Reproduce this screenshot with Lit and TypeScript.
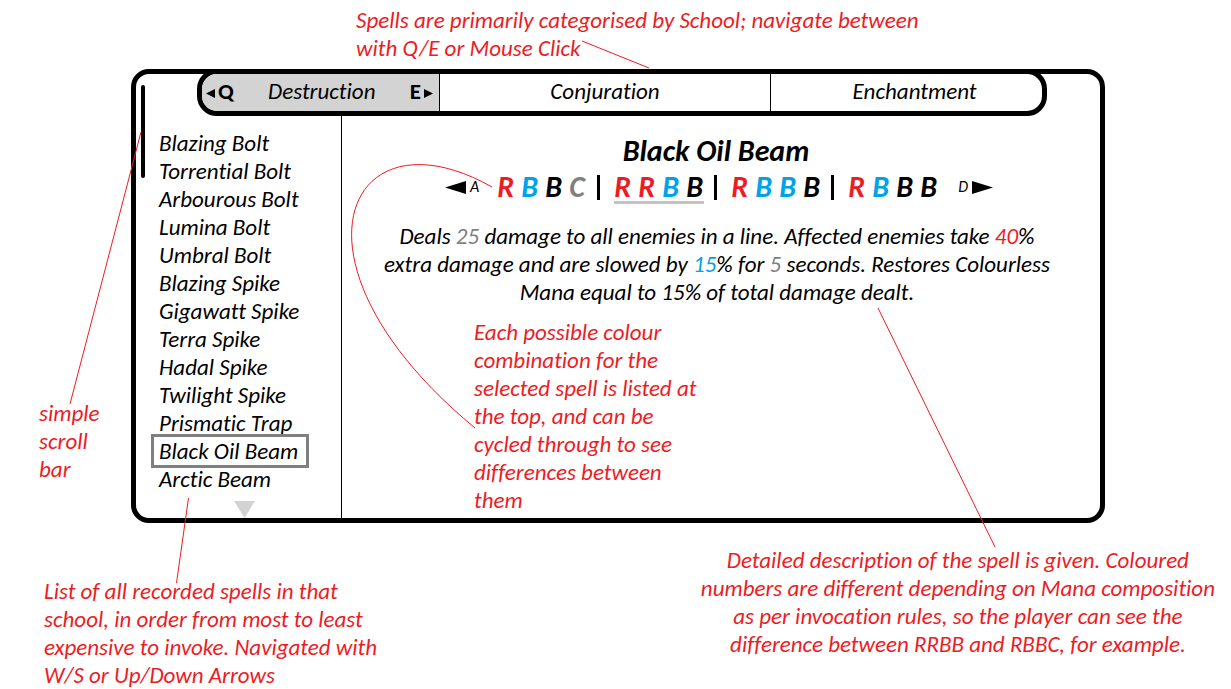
import { LitElement, html, css } from "lit";
import { customElement, state } from "lit/decorators.js";
import { classMap } from "lit/directives/class-map.js";

const SPELLS = [
  "Blazing Bolt", "Torrential Bolt", "Arbourous Bolt", "Lumina Bolt", "Umbral Bolt",
  "Blazing Spike", "Gigawatt Spike", "Terra Spike", "Hadal Spike", "Twilight Spike",
  "Prismatic Trap", "Black Oil Beam", "Arctic Beam",
];

// R is red mana, U is blue, B is black, C is colourless.
const COMBOS = ["RUBC", "RRUB", "RUUB", "RUBB"];
const MANA: Record<string, { cls: string; label: string }> = {
  R: { cls: "red", label: "R" },
  U: { cls: "blue", label: "B" },
  B: { cls: "black", label: "B" },
  C: { cls: "grey", label: "C" },
};

@customElement("app-root")
export class AppRoot extends LitElement {
  @state() private spell = "Black Oil Beam";
  @state() private combo = 1;

  static styles = css`
    :host {
      display: block;
      position: relative;
      font: italic 23px/28px Calibri, Carlito, Lato, sans-serif;
      font-variant-ligatures: none;
      color: #000;
      background: #fff;
    }
    * { box-sizing: border-box; }
    h1, p, ul { margin: 0; padding: 0; }
    ul { list-style: none; }
    button {
      font: inherit;
      font-variant-ligatures: inherit;
      color: inherit;
      background: none;
      border: 0;
      padding: 0;
      margin: 0;
      cursor: pointer;
      white-space: nowrap;
    }
    .page {
      display: grid;
      grid-template-columns: 131px minmax(0, 1fr) 126px;
      min-height: 100vh;
      align-content: start;
      overflow: hidden;
    }
    .note { color: #ed1c24; white-space: nowrap; }
    .note-top { grid-column: 2; padding: 6px 0 7px 225px; }
    .note-scroll { grid-column: 1; align-self: end; padding: 0 0 40px 39px; }
    .note-combo { padding: 12px 0 4px 132px; align-self: stretch; }
    .footer {
      grid-column: 1 / -1;
      display: flex;
      justify-content: space-between;
      align-items: flex-start;
      padding: 23px 16px 0 44px;
    }
    .note-list { padding-top: 31px; }
    .note-detail { text-align: center; }

    .frame {
      grid-column: 2;
      border: 5px solid #000;
      border-radius: 18px;
      display: grid;
      grid-template-columns: 18px 187px minmax(0, 1fr);
      grid-template-rows: 42px auto;
    }
    .tabs {
      grid-area: 1 / 1 / 2 / 4;
      display: grid;
      grid-template-columns: 237fr 331fr 272fr;
      margin: -5px 53px 0 61px;
      border: 5px solid #000;
      border-radius: 20px;
      overflow: hidden;
    }
    .tab { border-left: 1px solid #000; padding-bottom: 3px; }
    .tab.wide { padding-left: 16px; }
    .tab.active {
      border-left: 0;
      background: #d3d3d3;
      display: flex;
      justify-content: space-between;
      align-items: center;
      padding: 0 6px 3px 4px;
    }
    .key { display: flex; align-items: center; gap: 3px; font-weight: bold; font-style: normal; }
    .key svg { margin-top: 4px; }
    .scroll {
      grid-area: 1 / 1 / 3 / 2;
      width: 4px;
      height: 93px;
      margin: 11px 0 0 5px;
      border-radius: 2px;
      background: #000;
    }
    .sidebar {
      grid-area: 2 / 2;
      display: flex;
      flex-direction: column;
      align-items: flex-start;
      padding-top: 13px;
    }
    .spell { display: block; width: 152px; height: 28px; padding: 0 0 2px 5px; text-align: left; }
    .spell.selected { outline: 3px solid #7f7f7f; }
    .more { display: block; margin: 8px 0 0 80px; }
    .detail {
      grid-area: 2 / 3;
      border-left: 1px solid #000;
      padding-top: 18px;
      display: flex;
      flex-direction: column;
    }
    .title { font-size: 30px; line-height: 34px; text-align: center; padding-right: 10px; }
    .cycle {
      display: flex;
      justify-content: center;
      align-items: center;
      height: 38px;
      padding-right: 4px;
    }
    .step { display: flex; align-items: center; gap: 4px; font-size: 16px; line-height: 20px; }
    .prev { margin-right: 18px; }
    .next { margin-left: 20px; }
    .combo {
      display: grid;
      grid-template-columns: repeat(4, 18px);
      gap: 6px;
      height: 34px;
      border-bottom: 3px solid transparent;
      font-size: 30px;
      font-weight: bold;
      line-height: 34px;
    }
    .combo.current { border-color: #c3c3c3; }
    .bar { width: 3px; height: 25px; margin: 0 14px 0 10px; background: #000; }
    .text { text-align: center; white-space: nowrap; padding: 16px 8px 0 0; }
    .red { color: #ed1c24; }
    .blue { color: #00a2e8; }
    .grey { color: #7f7f7f; }
    .black { color: #000; }
    .lines {
      position: absolute;
      left: 0;
      top: 0;
      pointer-events: none;
      fill: none;
      stroke: #ed1c24;
      stroke-width: 1;
    }
  `;

  private arrow(width: number, height: number, left: boolean) {
    const points = left
      ? `0,${height / 2} ${width},0 ${width},${height}`
      : `0,0 ${width},${height / 2} 0,${height}`;
    return html`<svg width=${width} height=${height} aria-hidden="true"><polygon points=${points} /></svg>`;
  }

  private cycle(step: number) {
    this.combo = (this.combo + step + COMBOS.length) % COMBOS.length;
  }

  render() {
    return html`
      <div class="page">
        <p class="note note-top">
          Spells are primarily categorised by School; navigate between<br />with Q/E or Mouse Click
        </p>
        <p class="note note-scroll">simple<br />scroll<br />bar</p>
        <main class="frame">
          <div class="scroll"></div>
          <nav class="tabs">
            <button class="tab active">
              <span class="key">${this.arrow(9, 9, true)}Q</span>
              <span>Destruction</span>
              <span class="key">E${this.arrow(9, 9, false)}</span>
            </button>
            <button class="tab">Conjuration</button>
            <button class="tab wide">Enchantment</button>
          </nav>
          <section class="sidebar">
            <ul>
              ${SPELLS.map((name) => html`
                <li>
                  <button
                    class=${classMap({ spell: true, selected: name === this.spell })}
                    @click=${() => (this.spell = name)}
                  >${name}</button>
                </li>`)}
            </ul>
            <svg class="more" width="21" height="17" fill="#d3d3d3" aria-hidden="true">
              <polygon points="0,0 21,0 10.5,17" />
            </svg>
          </section>
          <section class="detail">
            <h1 class="title">${this.spell}</h1>
            <div class="cycle">
              <button class="step prev" @click=${() => this.cycle(-1)}>${this.arrow(21, 13, true)}A</button>
              ${COMBOS.map((combo, i) => html`
                ${i ? html`<span class="bar"></span>` : ""}
                <span class=${classMap({ combo: true, current: i === this.combo })}>
                  ${[...combo].map((m) => html`<span class=${MANA[m].cls}>${MANA[m].label}</span>`)}
                </span>`)}
              <button class="step next" @click=${() => this.cycle(1)}>D${this.arrow(21, 13, false)}</button>
            </div>
            <p class="text">
              Deals <span class="grey">25</span> damage to all enemies in a line. Affected enemies take <span class="red">40</span>%<br />
              extra damage and are slowed by <span class="blue">15</span>% for <span class="grey">5</span> seconds. Restores Colourless<br />
              Mana equal to 15% of total damage dealt.
            </p>
            <p class="note note-combo">
              Each possible colour<br />combination for the<br />selected spell is listed at<br />the top, and can be<br />cycled through to see<br />differences between<br />them
            </p>
          </section>
        </main>
        <footer class="footer">
          <p class="note note-list">
            List of all recorded spells in that<br />school, in order from most to least<br />expensive to invoke. Navigated with<br />W/S or Up/Down Arrows
          </p>
          <p class="note note-detail">
            Detailed description of the spell is given. Coloured<br />numbers are different depending on Mana composition<br />as per invocation rules, so the player can see the<br />difference between RRBB and RBBC, for example.
          </p>
        </footer>
      </div>
      <svg class="lines" width="1231" height="689" aria-hidden="true">
        <path d="M582 41L649 68" />
        <path d="M141 132L70 404" />
        <path d="M188.500 498L176.500 583" />
        <path d="M878 308L995 547" />
        <path d="M492 187C347 105 274 262 475 428" />
      </svg>
    `;
  }
}
